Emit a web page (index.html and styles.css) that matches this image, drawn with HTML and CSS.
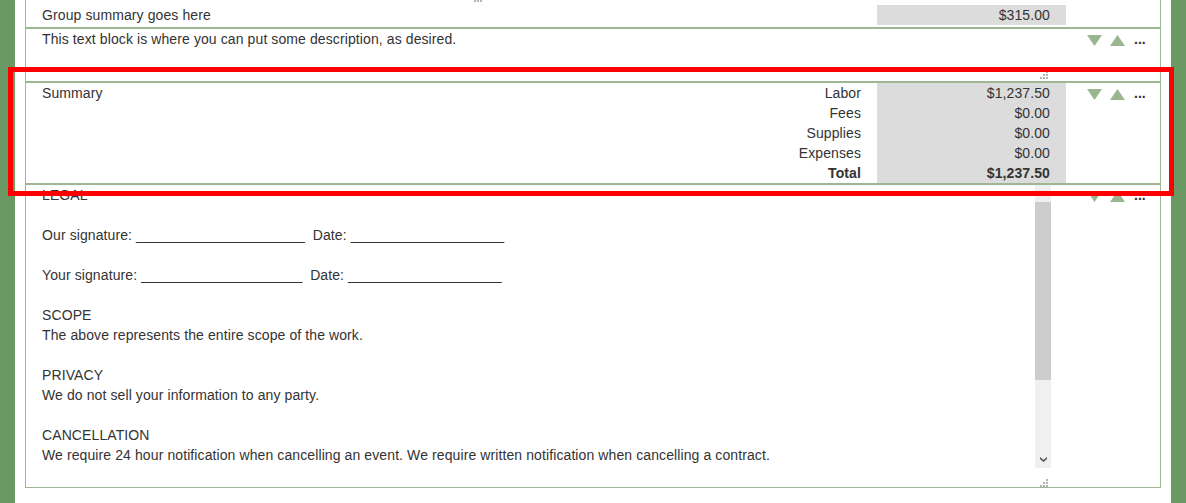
FILE: index.html
```html
<!DOCTYPE html>
<html>
<head>
<meta charset="utf-8">
<link rel="stylesheet" href="styles.css">
</head>
<body>
<div class="page">
  <div class="section s-group">
    <svg class="grip grip-top" width="8" height="8" viewBox="0 0 8 8"><rect x="6" y="0" width="2" height="2"/><rect x="3" y="3" width="2" height="2"/><rect x="6" y="3" width="2" height="2"/><rect x="0" y="6" width="2" height="2"/><rect x="3" y="6" width="2" height="2"/><rect x="6" y="6" width="2" height="2"/></svg>
    <div class="main row">
      <div class="title">Group summary goes here</div>
      <div class="amounts"><div>$315.00</div></div>
    </div>
    <div class="controls"></div>
  </div>

  <div class="section s-text">
    <div class="main col text-main">
      <div class="body-text">This text block is where you can put some description, as desired.</div>
      <svg class="grip" width="8" height="8" viewBox="0 0 8 8"><rect x="6" y="0" width="2" height="2"/><rect x="3" y="3" width="2" height="2"/><rect x="6" y="3" width="2" height="2"/><rect x="0" y="6" width="2" height="2"/><rect x="3" y="6" width="2" height="2"/><rect x="6" y="6" width="2" height="2"/></svg>
    </div>
    <div class="controls">
      <svg class="tri" width="15" height="11" viewBox="0 0 15 11"><path d="M0 0H15L7.5 11Z"/></svg>
      <svg class="tri" width="15" height="11" viewBox="0 0 15 11"><path d="M0 11H15L7.5 0Z"/></svg>
      <span class="more">...</span>
    </div>
  </div>

  <div class="section s-summary">
    <div class="main row">
      <div class="title">Summary</div>
      <div class="labels">
        <div>Labor</div>
        <div>Fees</div>
        <div>Supplies</div>
        <div>Expenses</div>
        <div class="bold">Total</div>
      </div>
      <div class="amounts">
        <div>$1,237.50</div>
        <div>$0.00</div>
        <div>$0.00</div>
        <div>$0.00</div>
        <div class="bold">$1,237.50</div>
      </div>
    </div>
    <div class="controls">
      <svg class="tri" width="15" height="11" viewBox="0 0 15 11"><path d="M0 0H15L7.5 11Z"/></svg>
      <svg class="tri" width="15" height="11" viewBox="0 0 15 11"><path d="M0 11H15L7.5 0Z"/></svg>
      <span class="more">...</span>
    </div>
  </div>

  <div class="section s-legal">
    <div class="main col legal-main">
      <div class="scrollbox">
        <div class="legal-text">
          <div>LEGAL</div>
          <div>&nbsp;</div>
          <div>Our signature: <span class="blank">______________________</span>&nbsp; Date: <span class="blank">____________________</span></div>
          <div>&nbsp;</div>
          <div>Your signature: <span class="blank">_____________________</span>&nbsp; Date: <span class="blank">____________________</span></div>
          <div>&nbsp;</div>
          <div>SCOPE</div>
          <div>The above represents the entire scope of the work.</div>
          <div>&nbsp;</div>
          <div>PRIVACY</div>
          <div>We do not sell your information to any party.</div>
          <div>&nbsp;</div>
          <div>CANCELLATION</div>
          <div>We require 24 hour notification when cancelling an event. We require written notification when cancelling a contract.</div>
        </div>
        <div class="scrollbar">
          <div class="sb-btn"><svg width="7" height="5" viewBox="0 0 7 5"><path d="M0 3L3.5 0L7 3L7 5L3.5 2L0 5Z"/></svg></div>
          <div class="sb-track"><div class="sb-thumb"></div></div>
          <div class="sb-btn"><svg width="7" height="5" viewBox="0 0 7 5"><path d="M0 0L3.5 3L7 0L7 2L3.5 5L0 2Z"/></svg></div>
        </div>
      </div>
      <div class="grip-row">
        <svg class="grip" width="8" height="8" viewBox="0 0 8 8"><rect x="6" y="0" width="2" height="2"/><rect x="3" y="3" width="2" height="2"/><rect x="6" y="3" width="2" height="2"/><rect x="0" y="6" width="2" height="2"/><rect x="3" y="6" width="2" height="2"/><rect x="6" y="6" width="2" height="2"/></svg>
      </div>
    </div>
    <div class="controls">
      <svg class="tri" width="15" height="11" viewBox="0 0 15 11"><path d="M0 0H15L7.5 11Z"/></svg>
      <svg class="tri" width="15" height="11" viewBox="0 0 15 11"><path d="M0 11H15L7.5 0Z"/></svg>
      <span class="more">...</span>
    </div>
  </div>
</div>
<div class="highlight"></div>
</body>
</html>
```

FILE: styles.css
```css
html, body {
  margin: 0;
  padding: 0;
  height: 100%;
  overflow: hidden;
}
body {
  background: #6a9963;
  font-family: "Liberation Sans", Arial, sans-serif;
  font-size: 14px;
  line-height: 20px;
  letter-spacing: 0.1px;
  color: #333;
}
.page {
  margin: 0 15px;
  padding: 0 10px;
  background: #fff;
  height: 100%;
  box-sizing: border-box;
}
.section {
  display: flex;
  border: 1px solid #9db792;
  position: relative;
}
.s-group {
  border-top: none;
  padding-top: 5px;
  padding-bottom: 2px;
}
.main {
  flex: 1;
  min-width: 0;
}
.row {
  display: flex;
}
.col {
  display: flex;
  flex-direction: column;
}
.title {
  flex: 1;
  padding-left: 16px;
}
.labels {
  text-align: right;
  padding-right: 16px;
}
.amounts {
  width: 189px;
  box-sizing: border-box;
  padding-right: 16px;
  background: #dcdcdc;
  text-align: right;
}
.bold {
  font-weight: bold;
}
.controls {
  width: 94px;
  box-sizing: border-box;
  padding-left: 21px;
  padding-top: 6px;
  display: flex;
  align-items: flex-start;
}
.tri {
  display: block;
  fill: #9ab68e;
  margin-right: 8px;
}
.more {
  display: block;
  font-weight: bold;
  line-height: 11px;
  height: 11px;
  margin-top: -1px;
  margin-left: 1px;
  letter-spacing: 0;
  color: #333;
}
.text-main {
  height: 52px;
  padding-right: 15px;
  justify-content: space-between;
}
.body-text {
  padding-left: 16px;
}
.grip {
  display: block;
  fill: #b4b4b4;
  align-self: flex-end;
  margin-right: 3px;
  margin-bottom: 2px;
}
.grip-top {
  position: absolute;
  left: 448px;
  top: -6px;
}
.legal-main {
  padding-right: 15px;
}
.scrollbox {
  display: flex;
  height: 283px;
}
.legal-text {
  flex: 1;
  min-width: 0;
  overflow: hidden;
  padding-left: 16px;
  white-space: nowrap;
}
.blank {
  letter-spacing: -0.12px;
}
.scrollbar {
  width: 16px;
  background: #f0f0f0;
  display: flex;
  flex-direction: column;
}
.sb-btn {
  height: 17px;
  display: flex;
  align-items: center;
  justify-content: center;
}
.sb-btn svg {
  display: block;
  fill: #505050;
}
.sb-track {
  flex: 1;
}
.sb-thumb {
  height: 178px;
  background: #cdcdcd;
}
.grip-row {
  height: 19px;
  display: flex;
  justify-content: flex-end;
  align-items: flex-start;
  padding-top: 7px;
  box-sizing: border-box;
}
.grip-row .grip {
  margin-bottom: 0;
}
.highlight {
  position: absolute;
  left: 8px;
  top: 67px;
  width: 1166px;
  height: 129px;
  border: 5px solid #ff0000;
  box-sizing: border-box;
  pointer-events: none;
}
```
